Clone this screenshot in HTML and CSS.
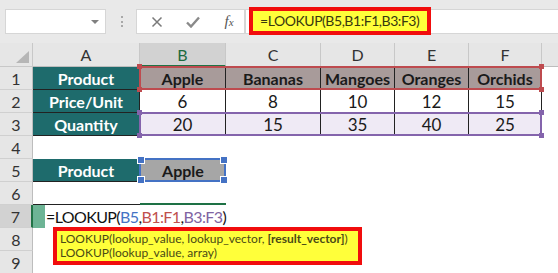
FILE: index.html
```html
<!DOCTYPE html>
<html>
<head>
<meta charset="utf-8">
<link rel="stylesheet" href="styles.css">
</head>
<body>
<div class="toolbar">
  <div class="namebox"><span class="arrow"></span></div>
  <div class="grip"></div>
  <div class="fbtns">
    <svg width="12" height="12" viewBox="0 0 12 12"><path d="M1.5 1.5 L10.5 10.5 M10.5 1.5 L1.5 10.5" stroke="#7a7a7a" stroke-width="1.5" fill="none"/></svg>
    <svg width="14" height="12" viewBox="0 0 14 12"><path d="M1 6.5 L5 10.5 L13 1.5" stroke="#8a8a8a" stroke-width="2.4" fill="none"/></svg>
    <span class="fx">f<small>x</small></span>
  </div>
  <div class="finput"><span class="fhl">=LOOKUP(B5,B1:F1,B3:F3)</span></div>
</div>

<div class="sheet">
  <div class="corner"><span class="tri"></span></div>
  <div class="ch">A</div>
  <div class="ch sel">B</div>
  <div class="ch">C</div>
  <div class="ch">D</div>
  <div class="ch">E</div>
  <div class="ch">F</div>
  <div class="ch last"></div>

  <div class="rh">1</div>
  <div class="c tb teal">Product</div>
  <div class="c tb head">Apple<div class="rng red"><i class="h tl"></i><i class="h tr"></i><i class="h bl"></i><i class="h br"></i></div></div>
  <div class="c tb head">Bananas</div>
  <div class="c tb head">Mangoes</div>
  <div class="c tb head">Oranges</div>
  <div class="c tb head">Orchids</div>
  <div class="c"></div>

  <div class="rh">2</div>
  <div class="c tb teal">Price/Unit</div>
  <div class="c tb">6</div>
  <div class="c tb">8</div>
  <div class="c tb">10</div>
  <div class="c tb">12</div>
  <div class="c tb">15</div>
  <div class="c"></div>

  <div class="rh">3</div>
  <div class="c tb teal">Quantity</div>
  <div class="c tb lav">20<div class="rng purple"><i class="h tl"></i><i class="h tr"></i><i class="h bl"></i><i class="h br"></i></div></div>
  <div class="c tb lav">15</div>
  <div class="c tb lav">35</div>
  <div class="c tb lav">40</div>
  <div class="c tb lav">25</div>
  <div class="c"></div>

  <div class="rh">4</div>
  <div class="c wide"></div>

  <div class="rh">5</div>
  <div class="c tb teal">Product</div>
  <div class="c gray">Apple<div class="rng blue one"><i class="h tl"></i><i class="h tr"></i><i class="h bl"></i><i class="h br"></i></div></div>
  <div class="c wide5"></div>

  <div class="rh">6</div>
  <div class="c line-a"></div>
  <div class="c line-b"></div>
  <div class="c wide5"></div>

  <div class="rh act">7</div>
  <div class="c edit"><span class="cur"></span>=LOOKUP(<span class="rb">B5</span>,<span class="rr">B1:F1</span>,<span class="rp">B3:F3</span>)
    <div class="tip">LOOKUP(lookup_value, lookup_vector, <b>[result_vector]</b>)<br>LOOKUP(lookup_value, array)</div>
  </div>

  <div class="rh">8</div>
  <div class="c wide"></div>

  <div class="rh">9</div>
  <div class="c wide"></div>
</div>
</body>
</html>
```

FILE: styles.css
```css
body {
  margin: 0;
  width: 558px;
  height: 273px;
  overflow: hidden;
  background-color: #fff;
  font-family: Lato, "Liberation Sans", sans-serif;
}

/* formula bar */
.toolbar {
  height: 43px;
  box-sizing: border-box;
  padding-top: 9px;
  background-color: #e9e9e9;
  display: flex;
  align-items: flex-start;
}
.namebox {
  width: 101px;
  height: 25px;
  margin-left: 5px;
  box-sizing: border-box;
  background-color: #fff;
  border: 1px solid #d6d6d6;
  display: flex;
  justify-content: flex-end;
  align-items: center;
  padding-right: 6px;
}
.arrow {
  border-left: 4px solid transparent;
  border-right: 4px solid transparent;
  border-top: 4px solid #808080;
}
.grip {
  width: 0;
  height: 11px;
  margin: 7px 13px 0 15px;
  border-left: 2px dotted #a8a8a8;
}
.fbtns {
  width: 109px;
  height: 25px;
  box-sizing: border-box;
  padding-left: 2px;
  background-color: #fff;
  border: 1px solid #d6d6d6;
  display: grid;
  grid-template-columns: 36px 36px 36px;
  justify-items: center;
  align-items: center;
}
.fx {
  font-family: "Liberation Serif", serif;
  font-style: italic;
  font-size: 15px;
  color: #555;
}
.fx small {
  font-size: 11px;
}
.finput {
  flex: 1;
  height: 25px;
  box-sizing: border-box;
  background-color: #fff;
  border: 1px solid #d6d6d6;
  border-right: none;
}
.fhl {
  display: inline-block;
  width: 182px;
  height: 28px;
  margin: -3px 0 0 3px;
  box-sizing: border-box;
  border: 4px solid #f10d0d;
  background-color: #ffff3a;
  padding-left: 7px;
  font-size: 14px;
  letter-spacing: -0.45px;
  line-height: 20px;
  color: #38380f;
}

/* sheet */
.sheet {
  display: grid;
  grid-template-columns: 33px 107px 86px 95px 74px 74px 73px 1fr;
  grid-template-rows: 24px repeat(9, 23px);
}
.corner {
  background-color: #e6e6e6;
  border-right: 1px solid #c8c8c8;
  border-bottom: 1px solid #c8c8c8;
  position: relative;
}
.tri {
  position: absolute;
  right: 3px;
  bottom: 3px;
  border-left: 13px solid transparent;
  border-bottom: 12px solid #b6b6b6;
}
.ch {
  background-color: #e6e6e6;
  border-right: 1px solid #c8c8c8;
  border-bottom: 1px solid #bdbdbd;
  display: flex;
  justify-content: center;
  align-items: center;
  font-size: 16px;
  color: #333;
}
.ch.sel {
  background-color: #d2d2d2;
  border-bottom: 2px solid #217346;
  color: #1d6b3f;
}
.ch.last {
  border-right: none;
}
.rh {
  grid-column: 1;
  background-color: #e6e6e6;
  border-right: 1px solid #bdbdbd;
  border-bottom: 1px solid #d0d0d0;
  display: flex;
  justify-content: center;
  align-items: center;
  font-size: 16px;
  color: #333;
}
.rh.act {
  background-color: #d2d2d2;
  border-right: 2px solid #217346;
}
.c {
  position: relative;
  display: flex;
  justify-content: center;
  align-items: center;
  font-size: 17px;
  color: #1a1a1a;
}
.tb {
  border-right: 1px solid #222;
  border-bottom: 1px solid #222;
}
.teal {
  background-color: #1e6b6c;
  color: #fff;
  font-size: 16px;
  font-weight: bold;
}
.head {
  background-color: #a89b9a;
  font-size: 16px;
  font-weight: bold;
}
.lav {
  background-color: #efeaf5;
}
.gray {
  background-color: #a6a6a6;
  font-size: 16px;
  font-weight: bold;
}
.wide {
  grid-column: 2 / -1;
}
.wide5 {
  grid-column: 4 / -1;
}
.line-a {
  border-bottom: 1px solid #222;
}
.line-b {
  border-bottom: 2px solid #1e7145;
}
.edit {
  grid-column: 2 / -1;
  justify-content: flex-start;
  font-size: 16px;
  letter-spacing: -0.6px;
  color: #111;
}
.cur {
  align-self: stretch;
  width: 12px;
  margin-right: 1px;
  background-color: #6db495;
}
.rb { color: #4472c4; }
.rr { color: #c0504d; }
.rp { color: #8064a2; }

/* range highlights, laid over the cells of B..F */
.rng {
  position: absolute;
  z-index: 2;
  left: -1px;
  top: -1px;
  width: 403px;
  height: 24px;
  box-sizing: border-box;
  border: 2px solid currentColor;
}
.rng.one {
  width: 87px;
}
.red { color: #be4b4f; }
.purple { color: #8464ac; }
.blue { color: #4472c4; }
.h {
  position: absolute;
  width: 5px;
  height: 5px;
  background-color: currentColor;
}
.blue .h {
  width: 6px;
  height: 6px;
  border: 1px solid #fff;
}
.tl { left: -4px; top: -4px; }
.tr { right: -4px; top: -4px; }
.bl { left: -4px; bottom: -4px; }
.br { right: -4px; bottom: -4px; }

/* function tooltip */
.tip {
  position: absolute;
  z-index: 3;
  left: 20px;
  top: 22px;
  width: 309px;
  height: 38px;
  box-sizing: border-box;
  border: 4px solid #f10d0d;
  background-color: #ffff3a;
  padding: 1px 0 0 3px;
  font-size: 12px;
  letter-spacing: 0;
  line-height: 14px;
  color: #4a4a15;
}
```
